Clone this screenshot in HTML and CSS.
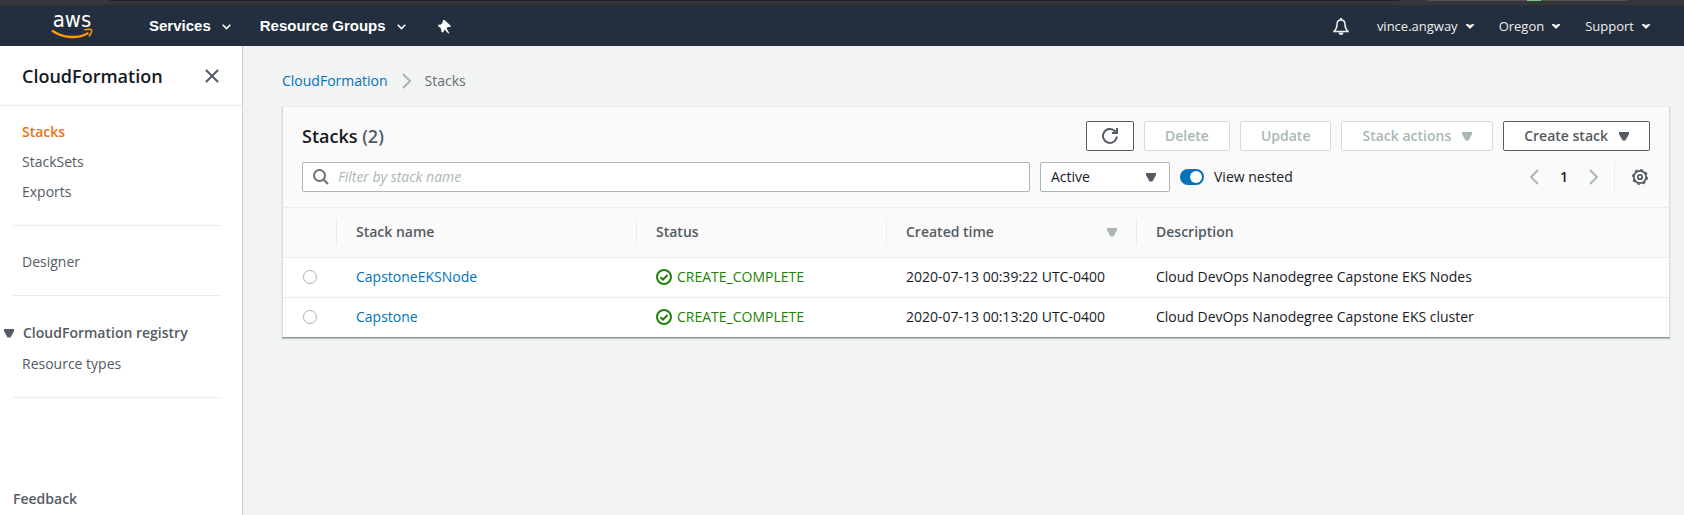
FILE: index.html
```html
<!DOCTYPE html>
<html lang="en">
<head>
<meta charset="utf-8">
<title>CloudFormation - Stacks</title>
<link rel="stylesheet" href="styles.css">
</head>
<body>
<svg width="0" height="0" class="sprite" aria-hidden="true">
  <symbol id="caret" viewBox="0 0 10 9"><path d="M0 0h10v2L6.500 8.500h-3L0 2z" fill="currentColor"/></symbol>
  <symbol id="chev" viewBox="0 0 9 6"><path d="M.7.8 4.500 4.600 8.300.8" fill="none" stroke="currentColor" stroke-width="1.600"/></symbol>
  <symbol id="drop" viewBox="0 0 8 5"><path d="M0 0h2l2 1.300L6 0h2v1L4 5 0 1z" fill="currentColor"/></symbol>
  <symbol id="next" viewBox="0 0 9 16"><path d="M1 1l7 7-7 7" fill="none" stroke="currentColor" stroke-width="2"/></symbol>
  <symbol id="prev" viewBox="0 0 9 16"><path d="M8 1 1 8l7 7" fill="none" stroke="currentColor" stroke-width="2"/></symbol>
  <symbol id="ok" viewBox="0 0 16 16"><circle cx="8" cy="8" r="7" fill="none" stroke="currentColor" stroke-width="2"/><path d="M4.500 8.200 7 10.600l4.500-4.600" fill="none" stroke="currentColor" stroke-width="2"/></symbol>
</svg>
<div class="chrome" aria-hidden="true"><span class="chrome-tab"></span><span class="chrome-bar"></span><span class="chrome-mark"></span><span class="chrome-bar chrome-bar-end"></span></div>
<header class="topbar">
  <a class="logo" href="#" aria-label="aws home">
    <svg width="42" height="40" viewBox="0 0 42 40">
      <text x="21" y="21" text-anchor="middle" class="logo-text">aws</text>
      <path d="M1 24.500C12 32.500 27 33 37.500 27" fill="none" stroke="#f90" stroke-width="2.400"/>
      <path d="M33.500 24c3.500-1.300 6.500-.8 7 0 .6 1.100-.6 4.800-2.600 6.400" fill="none" stroke="#f90" stroke-width="1.500"/>
    </svg>
  </a>
  <nav class="main-nav">
    <button class="nav-btn" type="button">Services<svg width="9" height="6"><use href="#chev"/></svg></button>
    <button class="nav-btn" type="button">Resource Groups<svg width="9" height="6"><use href="#chev"/></svg></button>
    <button class="nav-btn pin" type="button" aria-label="Pin"><svg width="13" height="14" viewBox="0 0 13 14"><path d="M5 0h1.500L12.500 5.500V7H9.800L8.600 8.500l2.900 5-1.500-.3-3.200-3.700L5 12.500 3.500 12 3 8.500 0 6V4.800L3 4.500 4.500 2.500z" fill="#fff"/></svg></button>
  </nav>
  <nav class="user-nav">
    <button class="icon-btn bell" type="button" aria-label="Notifications"><svg width="16" height="17" viewBox="0 0 16 17"><path d="M8 2C5 2 4 4.300 4 6.500 4 10 3 11.500 1 13.500h14c-2-2-3-3.500-3-7C12 4.300 11 2 8 2z" fill="none" stroke="#eee" stroke-width="1.500"/><path d="M7 0h2v2H7zM5.500 14.500h5c0 1.300-1 2.500-2.500 2.500s-2.500-1.200-2.500-2.500z" fill="#eee"/></svg></button>
    <button class="user-btn" type="button">vince.angway<svg width="8" height="5"><use href="#drop"/></svg></button>
    <button class="user-btn" type="button">Oregon<svg width="8" height="5"><use href="#drop"/></svg></button>
    <button class="user-btn" type="button">Support<svg width="8" height="5"><use href="#drop"/></svg></button>
  </nav>
</header>
<div class="page">
  <aside class="sidebar">
    <div class="side-head">
      <h2>CloudFormation</h2>
      <button class="icon-btn" type="button" aria-label="Close navigation"><svg width="14" height="14" viewBox="0 0 14 14"><path d="M1 1l12 12M13 1 1 13" stroke="#545b64" stroke-width="2"/></svg></button>
    </div>
    <nav class="side-nav">
      <ul><li><a class="current" href="#">Stacks</a></li><li><a href="#">StackSets</a></li><li><a href="#">Exports</a></li></ul>
      <ul><li><a href="#">Designer</a></li></ul>
      <div class="side-group">
        <button class="group-btn" type="button"><svg width="10" height="9"><use href="#caret"/></svg>CloudFormation registry</button>
        <ul><li><a href="#">Resource types</a></li></ul>
      </div>
    </nav>
    <a class="feedback" href="#">Feedback</a>
  </aside>
  <main class="content">
    <nav class="crumbs" aria-label="Breadcrumb"><a href="#">CloudFormation</a><svg width="9" height="16"><use href="#next"/></svg><span>Stacks</span></nav>
    <section class="panel">
      <div class="panel-head">
        <div class="row">
          <h1>Stacks <span>(2)</span></h1>
          <div class="actions">
            <button class="btn refresh" type="button" aria-label="Refresh"><svg width="16" height="16" viewBox="0 0 16 16"><path d="M14.800 8.500A6.900 6.900 0 1 1 13 3.300L14.500 5" fill="none" stroke="currentColor" stroke-width="2"/><path d="M15 0v5h-5" fill="none" stroke="currentColor" stroke-width="2"/></svg></button>
            <button class="btn" type="button" disabled>Delete</button>
            <button class="btn" type="button" disabled>Update</button>
            <button class="btn" type="button" disabled>Stack actions<svg width="10" height="9"><use href="#caret"/></svg></button>
            <button class="btn" type="button">Create stack<svg width="10" height="9"><use href="#caret"/></svg></button>
          </div>
        </div>
        <div class="row filters">
          <div class="search">
            <svg width="16" height="16" viewBox="0 0 16 16"><circle cx="6.500" cy="6.500" r="5.500" fill="none" stroke="#687078" stroke-width="2"/><path d="M10.500 10.500 15 15" stroke="#687078" stroke-width="2"/></svg>
            <input type="text" placeholder="Filter by stack name" aria-label="Filter by stack name">
          </div>
          <div class="select">
            <select aria-label="Stack status"><option>Active</option><option>Deleted</option></select>
            <svg width="10" height="9"><use href="#caret"/></svg>
          </div>
          <label class="toggle"><input type="checkbox" checked>View nested</label>
          <div class="pager">
            <button class="icon-btn" type="button" aria-label="Previous page"><svg width="9" height="16"><use href="#prev"/></svg></button>
            <button class="icon-btn page-num" type="button">1</button>
            <button class="icon-btn" type="button" aria-label="Next page"><svg width="9" height="16"><use href="#next"/></svg></button>
          </div>
          <div class="prefs">
            <button class="icon-btn" type="button" aria-label="Preferences"><svg width="16" height="16" viewBox="0 0 16 16"><circle cx="8" cy="8" r="6.200" fill="none" stroke="#545b64" stroke-width="1.800"/><circle cx="8" cy="8" r="7.200" fill="none" stroke="#545b64" stroke-width="1.600" stroke-dasharray="2.830 2.825"/><circle cx="8" cy="8" r="2.200" fill="none" stroke="#545b64" stroke-width="1.800"/></svg></button>
          </div>
        </div>
      </div>
      <table>
        <thead>
          <tr><th class="c-pick" aria-label="Select"></th><th class="c-name"><div>Stack name</div></th><th class="c-mid"><div>Status</div></th><th class="c-mid"><div>Created time<svg width="10" height="9"><use href="#caret"/></svg></div></th><th><div>Description</div></th></tr>
        </thead>
        <tbody>
          <tr><td><input type="radio" name="stack" aria-label="CapstoneEKSNode"></td><td><a href="#">CapstoneEKSNode</a></td><td><span class="status"><svg width="16" height="16"><use href="#ok"/></svg>CREATE_COMPLETE</span></td><td>2020-07-13 00:39:22 UTC-0400</td><td>Cloud DevOps Nanodegree Capstone EKS Nodes</td></tr>
          <tr><td><input type="radio" name="stack" aria-label="Capstone"></td><td><a href="#">Capstone</a></td><td><span class="status"><svg width="16" height="16"><use href="#ok"/></svg>CREATE_COMPLETE</span></td><td>2020-07-13 00:13:20 UTC-0400</td><td>Cloud DevOps Nanodegree Capstone EKS cluster</td></tr>
        </tbody>
      </table>
    </section>
  </main>
</div>
</body>
</html>
```

FILE: styles.css
```css
* { box-sizing: border-box; }
body {
  margin: 0;
  min-height: 100vh;
  display: flex;
  flex-direction: column;
  background: #f2f3f3;
  color: #16191f;
  font: 14px/20px "Open Sans", "Noto Sans", sans-serif;
}
svg { display: block; flex: none; }
.sprite { position: absolute; }
button, input, select { font: inherit; color: inherit; }
button { margin: 0; padding: 0; border: 0; background: none; cursor: pointer; }
a { color: #0073bb; text-decoration: none; }
ul { list-style: none; margin: 0; padding: 0; }
h1, h2 { margin: 0; font-size: 18px; line-height: 24px; font-weight: 600; }

/* browser edge above the console */
.chrome { display: flex; height: 6px; padding-left: 110px; background: #353639; border-bottom: 1px solid #2a2e34; }
.chrome span { height: 1px; }
.chrome-tab { flex: 1; background: #202124; }
.chrome-bar { width: 100px; margin-left: 28px; background: #505254; }
.chrome-mark { width: 14px; background: #81c784; }
.chrome .chrome-bar-end { width: 86px; margin: 0 57px 0 0; }

.topbar { display: flex; align-items: center; height: 40px; padding: 0 34px 0 51px; background: #232f3e; color: #fff; }
.logo { margin-right: 56px; }
.logo-text { font: 22px "DejaVu Sans Condensed", "DejaVu Sans", sans-serif; fill: #fff; }
.main-nav, .user-nav, .nav-btn, .user-btn { display: flex; align-items: center; }
.main-nav { gap: 29px; }
.nav-btn { gap: 11px; font: bold 15px/20px "Liberation Sans", Arial, sans-serif; }
.nav-btn svg { margin-top: 2px; }
.pin { padding-left: 3px; }
.user-nav { gap: 25px; margin-left: auto; }
.user-btn { gap: 8px; font-size: 13px; color: #eee; }
.bell { padding-right: 3px; }

.page { display: flex; flex: 1; }
.sidebar { display: flex; flex-direction: column; flex: none; width: 243px; background: #fff; border-right: 1px solid #c8cfcf; }
.side-head { display: flex; align-items: center; justify-content: space-between; height: 60px; padding: 0 23px 0 22px; border-bottom: 1px solid #eaeded; }
.side-nav { padding: 10px 20px 0 12px; }
.side-nav li { padding: 6px 10px 4px; }
.side-nav > ul, .side-group { padding-bottom: 19px; margin-bottom: 20px; border-bottom: 1px solid #eaeded; }
.side-nav a { color: #545b64; }
.side-nav a.current { color: #ec7211; font-weight: 600; }
.group-btn { display: flex; align-items: center; gap: 9px; margin: 27px 0 5px -8px; font-weight: 600; color: #545b64; }
.feedback { margin-top: auto; padding: 0 13px 6px; font-weight: 600; color: #545b64; }

.content { flex: 1; min-width: 0; padding: 25px 14px 24px 39px; }
.crumbs { display: flex; align-items: center; gap: 14px; color: #687078; }
.crumbs svg { color: #aab7b8; }

.panel { margin-top: 15px; background: #fff; border: 1px solid #d5dbdb; border-top-color: #eaeded; border-bottom-color: #879596; box-shadow: 0 1px 1px rgba(0, 28, 36, .2); }
.panel-head { display: flex; flex-direction: column; gap: 11px; padding: 14px 19px 15px; background: #fafafa; border-bottom: 1px solid #eaeded; }
.row, .actions { display: flex; align-items: center; gap: 10px; }
.row { justify-content: space-between; }
h1 span { color: #545b64; }
.btn { display: flex; align-items: center; gap: 11px; height: 30px; padding: 0 20px; font-weight: 600; color: #545b64; background: #fff; border: 1px solid #545b64; border-radius: 2px; }
.btn:disabled { color: #aab7b8; border-color: #d5dbdb; }
.refresh { padding: 0 15px; }

.search { display: flex; align-items: center; gap: 9px; flex: 1; max-width: 728px; height: 30px; padding: 0 10px; background: #fff; border: 1px solid #aab7b8; border-radius: 2px; }
.search input { flex: 1; min-width: 0; padding: 0; border: 0; outline: 0; background: none; }
.search input::placeholder { color: #aab7b8; font-style: italic; opacity: 1; }
.select { display: grid; align-items: center; width: 130px; }
.select select, .select svg { grid-area: 1 / 1; }
.select select { width: 100%; height: 30px; padding: 0 10px; appearance: none; background: #fff; border: 1px solid #aab7b8; border-radius: 2px; }
.select svg { justify-self: end; margin-right: 14px; color: #545b64; pointer-events: none; }
.toggle { display: flex; align-items: center; gap: 10px; }
.toggle input { display: flex; justify-content: flex-end; appearance: none; width: 24px; height: 16px; margin: 0; padding: 2px; border-radius: 8px; background: #0073bb; }
.toggle input::before { content: ""; width: 12px; height: 12px; border-radius: 50%; background: #fff; }
.toggle input:not(:checked) { justify-content: flex-start; background: #687078; }
.pager { display: flex; align-items: center; gap: 21px; margin-left: auto; color: #aab7b8; }
.page-num { font-weight: 600; color: #16191f; }
.prefs { display: flex; align-items: center; height: 30px; margin-left: 6px; padding: 0 2px 0 17px; border-left: 1px solid #eaeded; }

table { width: 100%; border-collapse: collapse; table-layout: fixed; }
th { height: 49px; padding: 0; text-align: left; font-weight: 600; color: #545b64; background: #fafafa; }
th div { display: flex; align-items: center; justify-content: space-between; height: 26px; padding: 0 19px; border-left: 1px solid #eaeded; }
th svg { color: #aab7b8; }
td { height: 40px; padding: 0 20px; border-top: 1px solid #eaeded; white-space: nowrap; }
.c-pick { width: 53px; }
.c-name { width: 300px; }
.c-mid { width: 250px; }
td input { display: block; appearance: none; width: 14px; height: 14px; margin: 0; border: 1px solid #aab7b8; border-radius: 50%; background: #fff; }
.status { display: flex; align-items: center; gap: 5px; color: #1d8102; }
```
